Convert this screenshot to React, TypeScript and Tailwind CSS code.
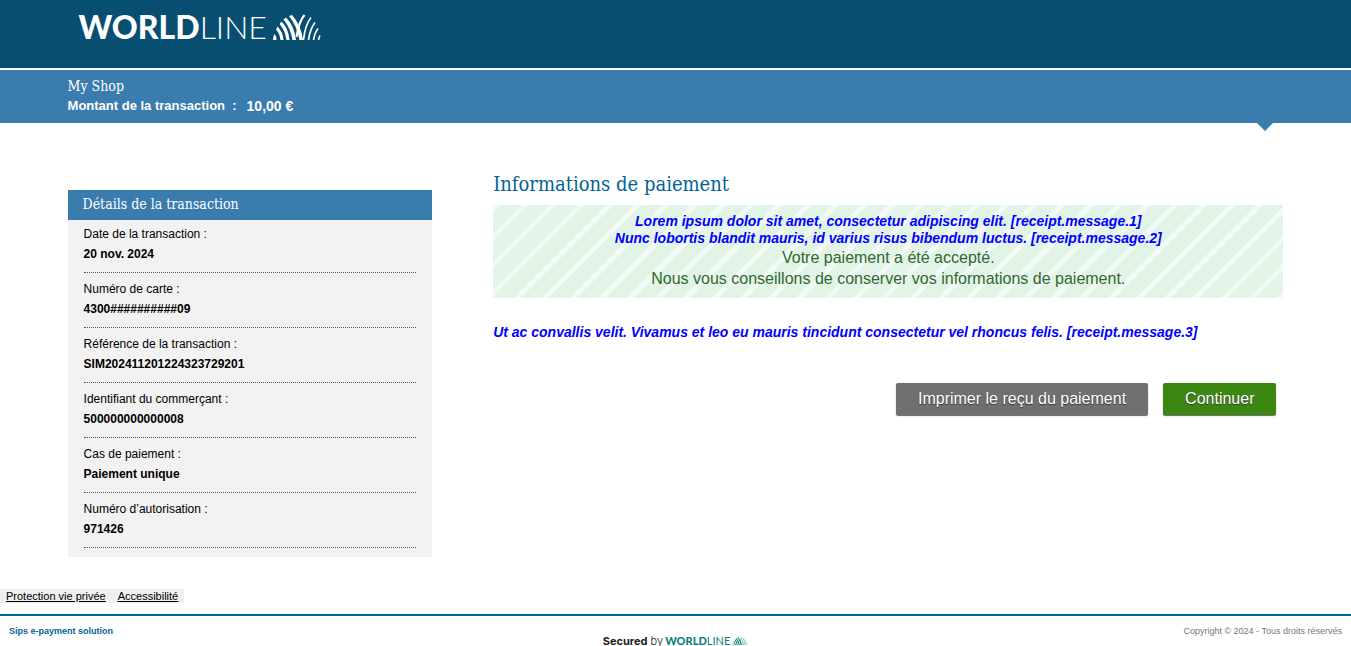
import React from 'react';

interface Detail {
  label: string;
  value: string;
}

const details: Detail[] = [
  { label: 'Date de la transaction :', value: '20 nov. 2024' },
  { label: 'Numéro de carte :', value: '4300##########09' },
  { label: 'Référence de la transaction :', value: 'SIM202411201224323729201' },
  { label: 'Identifiant du commerçant :', value: '500000000000008' },
  { label: 'Cas de paiement :', value: 'Paiement unique' },
  { label: 'Numéro d’autorisation :', value: '971426' },
];

const WaveMark: React.FC<{ className?: string }> = ({ className }) => (
  <svg className={className} viewBox="0 0 48 26" fill="currentColor" aria-hidden="true">
    <path d="M1.500 20Q3.500 22 3.500 26H0Q.3 22 1.500 20Z" />
    <path d="M4.500 12.500Q10 18 10.500 26H7.500Q6.500 19 3 15.500Z" />
    <path d="M8.500 7.500Q15.500 14 16.500 26H13.500Q12 16 6.500 10Z" />
    <path d="M13 3.500Q21.500 12 23 26H19.500Q17.500 14 10.500 5.500Z" />
    <path d="M19 1Q28 11 30 26H26.500Q24 12 16 2Z" />
    <g fill="none" stroke="currentColor" strokeWidth="1.600">
      <path d="M31.500 1Q26 7 23.500 23" strokeWidth="2.200" />
      <path d="M38 3.500Q32 11 30.500 26" />
      <path d="M42 8.500Q37 15 35.500 26" />
      <path d="M45 14.500Q41.500 19 40.500 26" />
      <path d="M47 21.500Q46 23 45.500 26" />
    </g>
  </svg>
);

const App: React.FC = () => {
  return (
    <div className="bg-white font-['Liberation_Sans',Arial,sans-serif] text-black">
      <header className="flex h-[68px] items-start bg-[#084e71] px-[5%] pt-[7px]">
        <div className="ml-[11px] flex items-center text-white">
          <span className="font-[Lato,sans-serif] text-[32px] leading-10 font-black">WORLD</span>
          <span className="font-[Lato,sans-serif] text-[32px] leading-10 font-light">LINE</span>
          <WaveMark className="ml-1.5 h-[26px] w-12" />
        </div>
      </header>

      <div className="relative mt-0.5 h-[53px] bg-[#3b7cae] px-[5%] pt-1.5 text-white">
        <h1 className="font-['DejaVu_Serif_Condensed','DejaVu_Serif',serif] text-sm leading-5">My Shop</h1>
        <p className="flex text-[13px] leading-5 font-bold">
          <span className="whitespace-pre">Montant de la transaction  :</span>
          <span className="ml-2.5 text-sm leading-5">10,00 €</span>
        </p>
        <span className="absolute top-full right-[78px] border-x-8 border-t-8 border-x-transparent border-t-[#3b7cae]" />
      </div>

      <div className="flex items-start justify-between px-[5%] pt-[47px]">
        <aside className="mt-5 w-[30%] bg-[#f2f2f2]">
          <h2 className="bg-[#3b7cae] px-[15px] pb-0.5 font-['DejaVu_Serif_Condensed','DejaVu_Serif',serif] text-sm leading-7 text-white">
            Détails de la transaction
          </h2>
          <dl className="px-4 pb-[9px] text-xs leading-5">
            {details.map((item) => (
              <div key={item.label} className="border-b border-dotted border-[#555] pt-1.5 pb-2 first:pt-1">
                <dt>{item.label}</dt>
                <dd className="font-bold">{item.value}</dd>
              </div>
            ))}
          </dl>
        </aside>

        <main className="w-[65%]">
          <h2 className="font-['DejaVu_Serif_Condensed','DejaVu_Serif',serif] text-xl leading-7 text-[#006496]">
            Informations de paiement
          </h2>
          <div className="mt-[7px] bg-[repeating-linear-gradient(135deg,#f2faf5_0_5px,#e2f4e6_5px_20px)] pt-2 pb-[9px] text-center text-base leading-[21px] text-[#336633]">
            <div className="text-sm leading-[17px] font-bold text-[#0000ff] italic">
              <p>Lorem ipsum dolor sit amet, consectetur adipiscing elit. [receipt.message.1]</p>
              <p>Nunc lobortis blandit mauris, id varius risus bibendum luctus. [receipt.message.2]</p>
            </div>
            <p>Votre paiement a été accepté.</p>
            <p>Nous vous conseillons de conserver vos informations de paiement.</p>
          </div>
          <p className="mt-[26px] text-sm leading-[17px] font-bold text-[#0000ff] italic">
            Ut ac convallis velit. Vivamus et leo eu mauris tincidunt consectetur vel rhoncus felis. [receipt.message.3]
          </p>
          <div className="mt-[42px] flex justify-end gap-[15px] pr-[7px] text-base leading-8 text-white">
            <button type="button" className="rounded-xs bg-[#707070] px-[22px] shadow-[0_1px_1px_#666] text-shadow-[0_1px_1px_#333]">
              Imprimer le reçu du paiement
            </button>
            <button type="button" className="rounded-xs bg-[#3c8712] px-[22px] shadow-[0_1px_1px_#666] text-shadow-[0_1px_1px_#333]">
              Continuer
            </button>
          </div>
        </main>
      </div>

      <nav className="mt-8 flex w-fit gap-3 bg-[#eee] px-1.5 text-[11px] leading-[14px] underline">
        <a href="#privacy">Protection vie privée</a>
        <a href="#accessibility">Accessibilité</a>
      </nav>

      <footer className="mt-[11px] grid grid-cols-3 items-start border-t-2 border-[#006496] px-[9px] pt-2 text-[9px] leading-[14px]">
        <p className="font-bold text-[#006496]">Sips e-payment solution</p>
        <div className="mt-2.5 flex items-center justify-center text-[#0b7f7d]">
          <span className="mr-0.5 font-[Inter,sans-serif] text-[11px] leading-[14px] text-[#222]">
            <b>Secured</b> <span className="font-light">by</span>
          </span>
          <span className="font-[Lato,sans-serif] text-[11px] font-black">WORLD</span>
          <span className="font-[Lato,sans-serif] text-[11px]">LINE</span>
          <WaveMark className="ml-0.5 h-2 w-4" />
        </div>
        <p className="text-right text-[#777]">Copyright © 2024 - Tous droits réservés</p>
      </footer>
    </div>
  );
};

export default App;
